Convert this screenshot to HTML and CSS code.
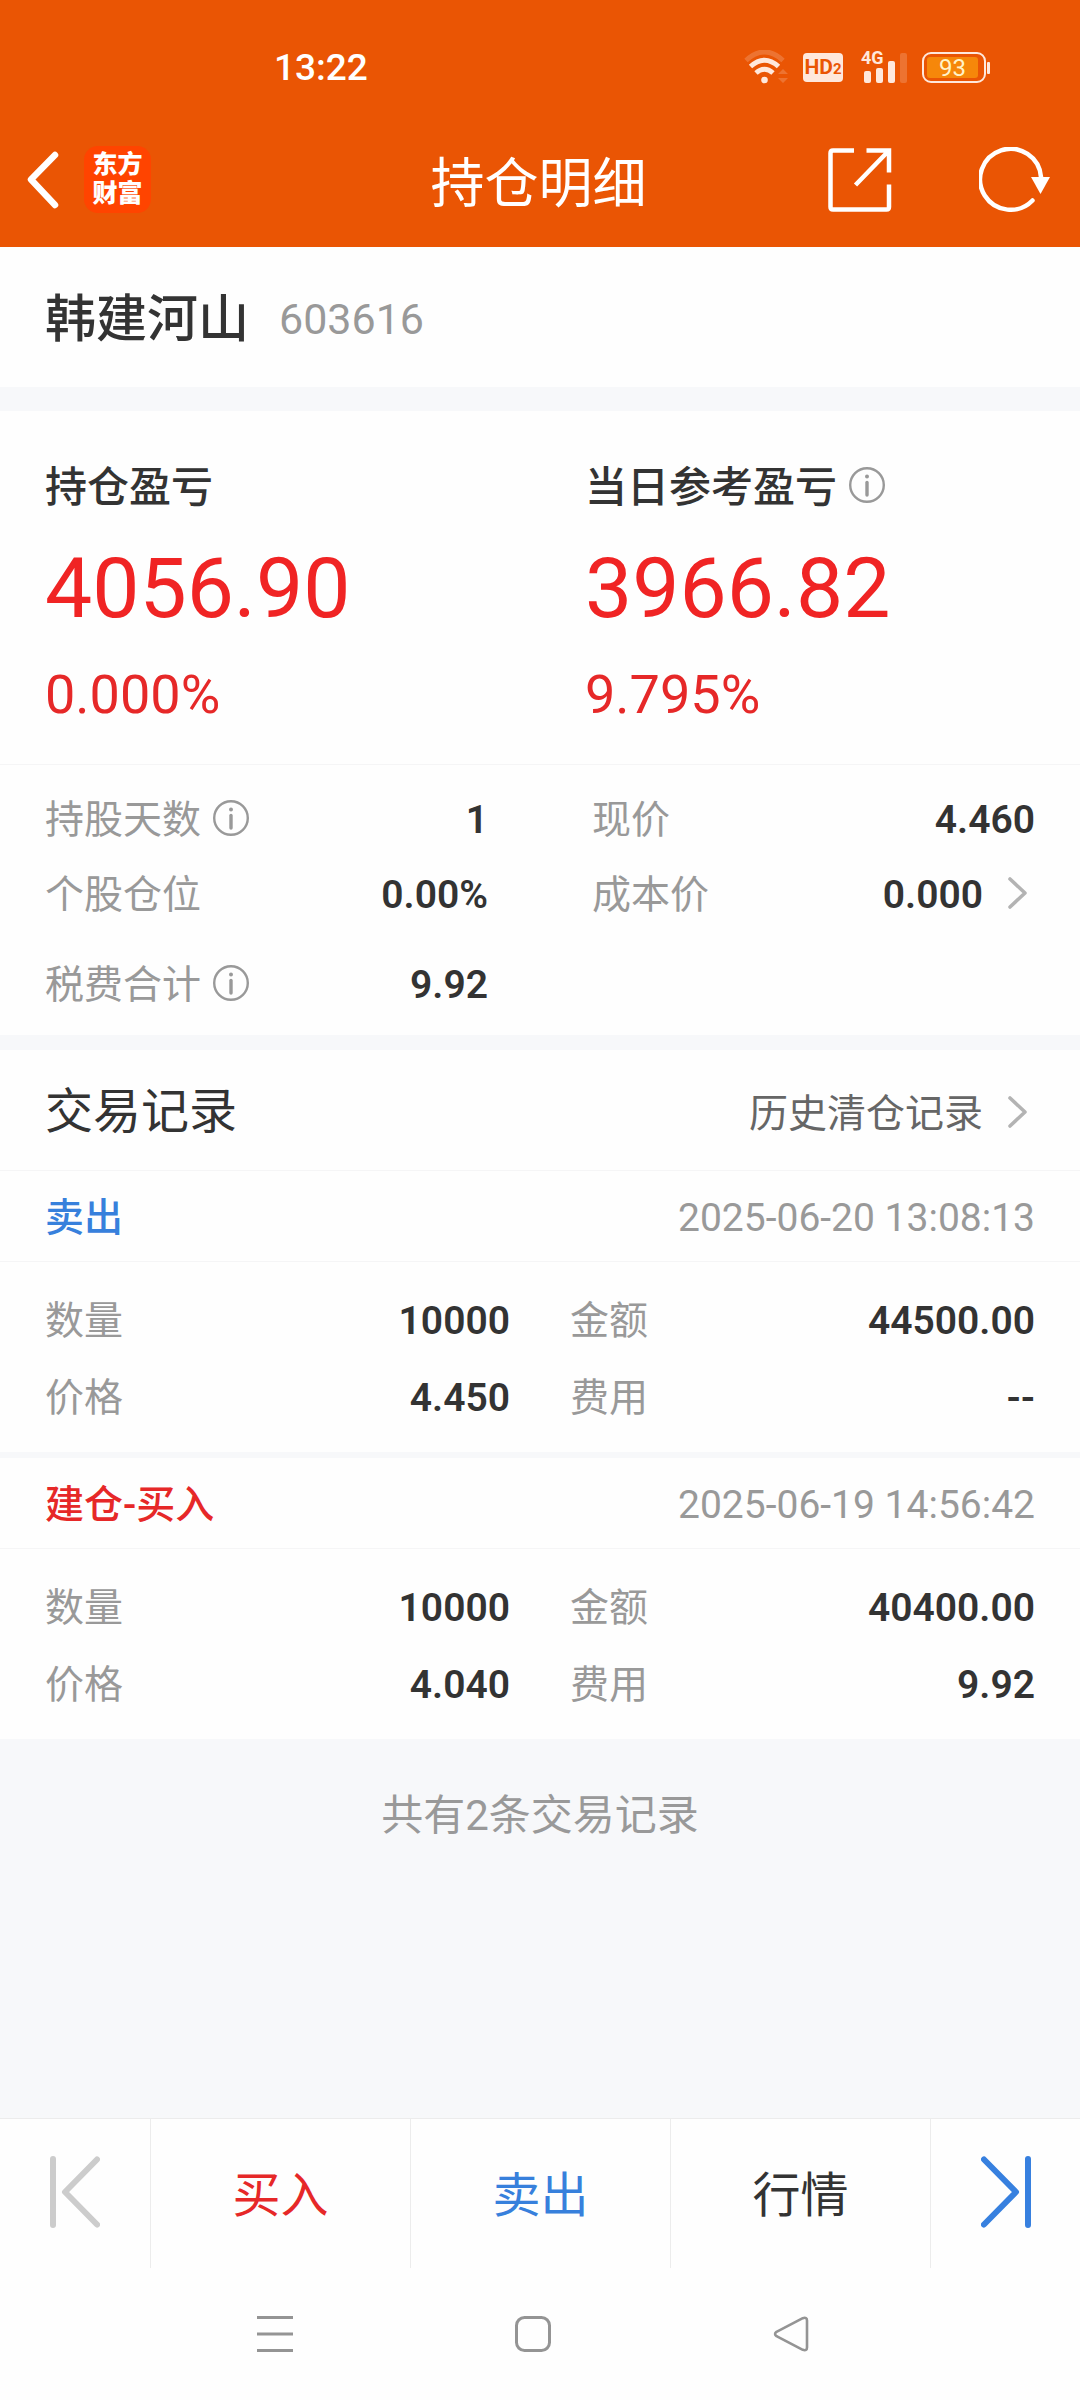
FILE: index.html
```html
<!DOCTYPE html>
<html lang="zh-CN">
<head>
<meta charset="utf-8">
<meta name="viewport" content="width=device-width, initial-scale=1">
<title>持仓明细</title>
<link rel="stylesheet" href="styles.css">
</head>
<body>
<svg class="sprite" aria-hidden="true">
  <symbol id="info" viewBox="0 0 36 36">
    <circle cx="18" cy="18" r="16.8" fill="none" stroke="currentColor" stroke-width="2.4"/>
    <circle cx="18" cy="9.4" r="2" fill="currentColor"/>
    <path d="M18 15.5V28" fill="none" stroke="currentColor" stroke-width="3.4" stroke-linecap="round"/>
  </symbol>
  <symbol id="chevron" viewBox="0 0 19 32">
    <path d="M2 2l15 14L2 30" fill="none" stroke="currentColor" stroke-width="3.6" stroke-linecap="round" stroke-linejoin="round"/>
  </symbol>
</svg>

<header class="top">
  <div class="status">
    <time class="clock">13:22</time>
    <div class="status-icons">
      <svg width="44" height="34" viewBox="0 0 44 34" fill="none">
        <path d="M2 10.5Q20.500 -6.500 39 10.500" stroke="#fff" stroke-opacity=".18" stroke-width="5"/>
        <path d="M6.500 16.500Q20.500 4 34.500 16.500" stroke="#ffe8dc" stroke-width="5"/>
        <path d="M12 23Q20.500 15.500 29 23" stroke="#ffe8dc" stroke-width="5"/>
        <circle cx="20.500" cy="30" r="3.300" fill="#ffe8dc"/>
        <path d="M34 24l5-5 5 5zM34 28h10l-5 5z" fill="#fff" fill-opacity=".18"/>
      </svg>
      <span class="hd">HD<small>2</small></span>
      <span class="signal">
        <svg width="46" height="34" viewBox="0 0 46 34" fill="#ffe8dc">
          <rect x="3" y="21" width="7" height="12" rx="2"/>
          <rect x="15" y="18" width="7" height="15" rx="2"/>
          <rect x="27" y="11" width="7" height="22" rx="2"/>
          <rect x="39" y="3" width="7" height="30" rx="2" fill="#fff" fill-opacity=".18"/>
        </svg>
        <span class="net">4G</span>
      </span>
      <span class="battery"><span class="level">93</span></span>
    </div>
  </div>
  <div class="titlebar">
    <div class="title-side">
      <button class="icon-btn" aria-label="返回">
        <svg width="34" height="58" viewBox="0 0 34 58"><path d="M29 4L5 28.500 29 54" fill="none" stroke="#fff" stroke-width="6.500" stroke-linecap="round" stroke-linejoin="round"/></svg>
      </button>
      <a class="logo" href="#">东方<br>财富</a>
    </div>
    <h1 class="title">持仓明细</h1>
    <div class="title-side title-actions">
      <button class="icon-btn" aria-label="分享">
        <svg width="64" height="64" viewBox="0 0 64 64" fill="none" stroke="#fff" stroke-width="4.500">
          <path d="M26 2.500H5Q2.500 2.500 2.500 5V59Q2.500 61.500 5 61.500H58.500Q61 61.500 61 59V36.500"/>
          <path d="M38.500 2.500H61V24.500M60 3.500L27.500 37"/>
        </svg>
      </button>
      <button class="icon-btn" aria-label="刷新">
        <svg width="72" height="66" viewBox="0 0 72 66" fill="none">
          <path d="M53.500 53.500A30.500 30.500 0 1 1 62 30" stroke="#fff" stroke-width="4.500" stroke-linecap="round"/>
          <path d="M52 30H71L61.500 47z" fill="#fff"/>
        </svg>
      </button>
    </div>
  </div>
</header>

<main class="page">
  <section class="card stock">
    <h2 class="stock-name">韩建河山</h2>
    <span class="stock-code">603616</span>
  </section>

  <section class="card holding">
    <div class="profits">
      <div class="profit">
        <h3 class="profit-label">持仓盈亏</h3>
        <p class="profit-value">4056.90</p>
        <p class="profit-rate">0.000%</p>
      </div>
      <div class="profit">
        <h3 class="profit-label">当日参考盈亏<button class="info" aria-label="说明"><svg><use href="#info"/></svg></button></h3>
        <p class="profit-value">3966.82</p>
        <p class="profit-rate">9.795%</p>
      </div>
    </div>
    <dl class="facts">
      <div class="pair"><dt>持股天数<button class="info" aria-label="说明"><svg><use href="#info"/></svg></button></dt><dd>1</dd></div>
      <div class="pair"><dt>现价</dt><dd>4.460</dd></div>
      <div class="pair"><dt>个股仓位</dt><dd>0.00%</dd></div>
      <div class="pair"><dt>成本价</dt><dd><a class="more" href="#">0.000<svg class="chevron"><use href="#chevron"/></svg></a></dd></div>
      <div class="pair tax"><dt>税费合计<button class="info" aria-label="说明"><svg><use href="#info"/></svg></button></dt><dd>9.92</dd></div>
    </dl>
  </section>

  <section class="records">
    <div class="card records-head">
      <h2 class="records-title">交易记录</h2>
      <a class="more history" href="#">历史清仓记录<svg class="chevron"><use href="#chevron"/></svg></a>
    </div>
    <article class="card record">
      <div class="record-head"><h3 class="sell">卖出</h3><time>2025-06-20 13:08:13</time></div>
      <dl class="record-body">
        <div class="pair"><dt>数量</dt><dd>10000</dd></div>
        <div class="pair"><dt>金额</dt><dd>44500.00</dd></div>
        <div class="pair"><dt>价格</dt><dd>4.450</dd></div>
        <div class="pair"><dt>费用</dt><dd>--</dd></div>
      </dl>
    </article>
    <article class="card record">
      <div class="record-head"><h3 class="buy">建仓-买入</h3><time>2025-06-19 14:56:42</time></div>
      <dl class="record-body">
        <div class="pair"><dt>数量</dt><dd>10000</dd></div>
        <div class="pair"><dt>金额</dt><dd>40400.00</dd></div>
        <div class="pair"><dt>价格</dt><dd>4.040</dd></div>
        <div class="pair"><dt>费用</dt><dd>9.92</dd></div>
      </dl>
    </article>
  </section>
  <p class="count">共有2条交易记录</p>
</main>

<nav class="tabs">
  <button class="tab step" aria-label="上一只" disabled>
    <svg width="50" height="72" viewBox="0 0 50 72" fill="none" stroke="#ccc" stroke-width="6" stroke-linecap="round" stroke-linejoin="round"><path d="M3 3V69M47 3.500L15 36 47 68.500"/></svg>
  </button>
  <button class="tab buy">买入</button>
  <button class="tab sell">卖出</button>
  <button class="tab">行情</button>
  <button class="tab step" aria-label="下一只">
    <svg width="50" height="72" viewBox="0 0 50 72" fill="none" stroke="#3780df" stroke-width="6" stroke-linecap="round" stroke-linejoin="round"><path d="M47 3V69M3 3.500L35 36 3 68.500"/></svg>
  </button>
</nav>

<nav class="system">
  <button class="icon-btn" aria-label="最近任务">
    <svg width="36" height="36" viewBox="0 0 36 36" stroke="#949494" stroke-width="3"><path d="M0 1.500H36M0 18H36M0 34.500H36"/></svg>
  </button>
  <button class="icon-btn" aria-label="主屏幕">
    <svg width="36" height="36" viewBox="0 0 36 36" fill="none" stroke="#949494" stroke-width="3"><rect x="1.500" y="1.500" width="33" height="33" rx="8"/></svg>
  </button>
  <button class="icon-btn" aria-label="返回">
    <svg width="36" height="36" viewBox="0 0 36 36" fill="none" stroke="#949494" stroke-width="2.600" stroke-linejoin="round"><path d="M3.500 15.800L29.800 2.200Q34 .8 34 4.500V31.500Q34 35.200 29.800 33.800L3.500 20.200Q.6 18 3.500 15.800z"/></svg>
  </button>
</nav>
</body>
</html>
```
FILE: styles.css
```css
:root {
  --orange: #ea5504;
  --ink: #333;
  --muted: #999;
  --red: #e62828;
  --blue: #3780dc;
  --surface: #fefefe;
  --ground: #f7f8fa;
  --line: #f5f5f6;
  --edge: 45px;
}

* { box-sizing: border-box; margin: 0; padding: 0; }

body {
  display: flex;
  flex-direction: column;
  min-height: 100vh;
  background: var(--surface);
  color: var(--ink);
  font-family: Roboto, "Noto Sans CJK SC", sans-serif;
  font-size: 39px;
  line-height: 45px;
}

button { border: 0; background: none; font: inherit; color: inherit; }
a { color: inherit; text-decoration: none; }
svg { display: block; }
h1, h2, h3 { font-weight: 400; }
.sprite { position: absolute; width: 0; height: 0; }
.icon-btn { display: block; }

/* Status bar and title bar */
.top { background: var(--orange); color: #fff; }
.status {
  display: flex;
  justify-content: space-between;
  align-items: center;
  height: 112px;
  padding: 22px 94px 0 274px;
}
.clock { font-size: 37px; font-weight: 500; }
.status-icons { display: flex; align-items: center; color: #ffe8dc; }
.hd {
  margin-left: 15px;
  width: 40px;
  height: 29px;
  border-radius: 4px;
  background: #ffe8dc;
  color: var(--orange);
  font: 700 21px/29px Roboto, sans-serif;
  text-align: center;
}
.hd small { font-size: 15px; }
.signal { position: relative; margin-left: 18px; }
.net {
  position: absolute;
  left: 0;
  top: 0;
  font: 700 18px/16px Roboto, sans-serif;
}
.battery {
  position: relative;
  margin-left: 15px;
  width: 64px;
  height: 31px;
  padding: 3px;
  border: 2px solid #ffe8dc;
  border-radius: 9px;
}
.battery::after {
  content: "";
  position: absolute;
  right: -6px;
  top: 8px;
  width: 3px;
  height: 12px;
  border-radius: 1px;
  background: #ffe8dc;
}
.level {
  display: block;
  width: 51px;
  height: 21px;
  border-radius: 3px;
  background: #f6870a;
  color: #fff3c8;
  font-size: 24px;
  line-height: 22px;
  text-align: center;
}
.titlebar {
  display: flex;
  align-items: center;
  height: 135px;
  padding: 0 29px 0 26px;
}
.title-side { flex: 1; display: flex; align-items: center; gap: 24px; }
.title-actions { justify-content: flex-end; gap: 87px; }
.logo {
  width: 67px;
  height: 67px;
  padding-top: 4px;
  border-radius: 14px;
  background: #ff4400;
  font-size: 25px;
  font-weight: 900;
  line-height: 29px;
  text-align: center;
}
.title { padding-top: 10px; font-size: 54px; line-height: 60px; }

/* Content */
.page { flex: 1; background: var(--ground); }
.card { background: var(--surface); }

.stock {
  display: flex;
  align-items: center;
  gap: 30px;
  height: 140px;
  padding: 4px var(--edge) 0;
}
.stock-name { padding-top: 2px; font-size: 51px; font-weight: 500; line-height: 60px; }
.stock-code { font-size: 43px; color: var(--muted); }

.holding { margin-top: 24px; }
.profits {
  display: grid;
  grid-template-columns: 1fr 1fr;
  padding: 47px 0 39px;
  border-bottom: 1px solid var(--line);
}
.profit { padding-left: var(--edge); }
.profit-label {
  display: flex;
  align-items: center;
  font-size: 42px;
  font-weight: 500;
  line-height: 60px;
}
.profit-value { margin-top: 21px; font-size: 84px; line-height: 100px; color: #f02424; }
.profit-rate { margin-top: 26px; font-size: 54px; line-height: 60px; color: var(--red); }
.info { flex: none; margin: 0 0 6px 12px; color: var(--muted); }
.info svg { width: 36px; height: 36px; }

.facts {
  display: grid;
  grid-template-columns: 1fr 1fr;
  column-gap: 104px;
  padding: 16px var(--edge) 14px;
}
.pair {
  display: flex;
  justify-content: space-between;
  align-items: center;
  height: 75px;
  padding-top: 4px;
}
.pair dt { display: flex; align-items: center; color: var(--muted); }
.pair dd { font-weight: 600; }
.tax { margin-top: 15px; }
.more { display: flex; align-items: center; }
.chevron { width: 19px; height: 32px; margin: 0 8px 5px 25px; color: #b3b3b3; }

.records { margin-top: 15px; }
.records-head {
  display: flex;
  justify-content: space-between;
  align-items: center;
  height: 120px;
  padding: 4px var(--edge) 0;
}
.records-title { font-size: 48px; line-height: 60px; }
.history { padding-top: 4px; color: #666; }

.record + .record { margin-top: 6px; }
.record-head {
  display: flex;
  justify-content: space-between;
  align-items: center;
  height: 92px;
  padding: 4px var(--edge) 0;
  border-top: 1px solid var(--line);
  border-bottom: 1px solid var(--line);
}
.record + .record .record-head { height: 91px; border-top: 0; }
.record-head h3 { font-size: 39px; font-weight: 500; }
.record-head time { color: var(--muted); }
.record-body {
  display: grid;
  grid-template-columns: 1fr 1fr;
  column-gap: 60px;
  padding: 19px var(--edge) 17px;
}
.record-body .pair { height: 77px; }
.buy { color: var(--red); }
.sell { color: var(--blue); }

.count {
  padding: 47px 0 45px;
  font-size: 42px;
  line-height: 60px;
  color: var(--muted);
  text-align: center;
}

/* Bottom actions */
.tabs { display: flex; height: 150px; border-top: 1px solid #ececec; }
.tab {
  flex: 1;
  display: flex;
  justify-content: center;
  align-items: center;
  padding-top: 4px;
  font-size: 48px;
}
.tab + .tab { border-left: 1px solid #ececec; }
.step { flex: 0 0 150px; padding: 0 0 4px; }

.system {
  display: flex;
  justify-content: center;
  align-items: center;
  gap: 222px;
  height: 132px;
  padding-right: 14px;
}
```
